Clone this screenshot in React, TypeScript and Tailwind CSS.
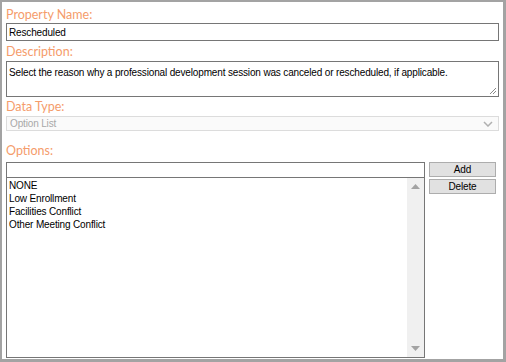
import React from "react";

const label = "text-[12.5px] leading-[17px] text-[#f59c6b] [font-family:Lato,sans-serif]";
const small = "text-[10px] tracking-[-0.15px] [font-family:'Liberation_Sans',Arial,sans-serif]";

export default function App() {
  const options = ["NONE", "Low Enrollment", "Facilities Conflict", "Other Meeting Conflict"];
  return (
    <div className="w-[506px] h-[362px] bg-white border-l-2 border-t-2 border-r-[3px] border-b-[3px] border-[#a3a3a3] pl-1 pr-[4px] box-border flex flex-col">
      <div className={`${label} mt-[4px]`}>Property Name:</div>
      <div className={`${small} h-[18px] border border-[#767676] flex items-center px-[2px] text-black`}>Rescheduled</div>
      <div className={`${label} mt-[2px] mb-[1px]`}>Description:</div>
      <div className="relative h-[36px] border border-[#767676]">
        <div className={`${small} px-[2px] pt-[4px] leading-[13px] text-black`}>
          Select the reason why a professional development session was canceled or rescheduled, if applicable.
        </div>
        <svg className="absolute right-[1px] bottom-[1px]" width="8" height="8" viewBox="0 0 8 8">
          <line x1="7" y1="1" x2="1" y2="7" stroke="#8a8a8a" strokeWidth="1" />
          <line x1="7" y1="4" x2="4" y2="7" stroke="#8a8a8a" strokeWidth="1" />
        </svg>
      </div>
      <div className={`${label} mt-[1px] mb-[1px]`}>Data Type:</div>
      <div className={`${small} h-[15px] border border-[#dcdcdc] bg-[#fafafa] flex items-center justify-between px-[3px] text-[#a8a8a8]`}>
        <span>Option List</span>
        <svg width="10" height="6" viewBox="0 0 10 6" className="mr-[2px]">
          <polyline points="1,1 5,5 9,1" fill="none" stroke="#b0b0b0" strokeWidth="1.5" />
        </svg>
      </div>
      <div className={`${label} mt-[11px] mb-[3px]`}>Options:</div>
      <div className="flex flex-1 min-h-0 gap-[4px]">
        <div className="flex flex-col w-[419px]">
          <div className="h-[16px] border border-[#767676]"></div>
          <div className="flex-1 border border-[#767676] border-t-0 flex mb-[1px]">
            <div className={`${small} flex-1 px-[2px] pt-[1px] leading-[13px] text-black`}>
              {options.map((o) => (
                <div key={o}>{o}</div>
              ))}
            </div>
            <div className="w-[17px] bg-[#f0f0f0] flex flex-col justify-between items-center py-[6px]">
              <svg width="9" height="5" viewBox="0 0 9 5">
                <polygon points="0,5 9,5 4.5,0" fill="#a3a3a3" />
              </svg>
              <svg width="9" height="5" viewBox="0 0 9 5">
                <polygon points="0,0 9,0 4.5,5" fill="#a3a3a3" />
              </svg>
            </div>
          </div>
        </div>
        <div className="flex flex-col gap-[2px] w-[67px]">
          <button className={`${small} h-[15px] leading-[13px] bg-[#e1e1e1] border border-[#adadad] text-black`}>Add</button>
          <button className={`${small} h-[15px] leading-[13px] bg-[#e1e1e1] border border-[#adadad] text-black`}>Delete</button>
        </div>
      </div>
    </div>
  );
}
